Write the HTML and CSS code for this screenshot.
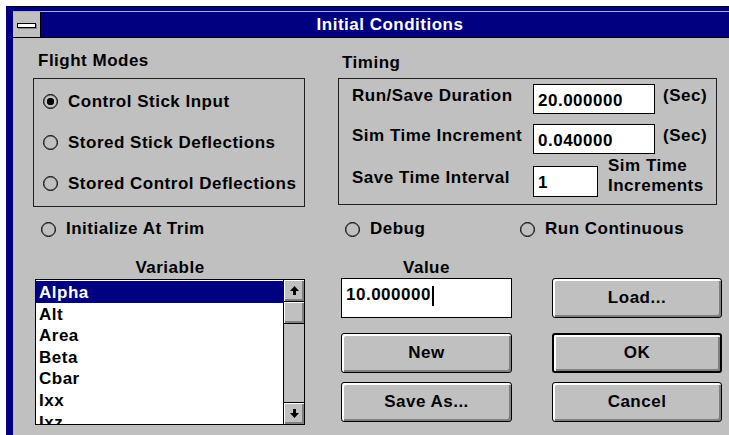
FILE: index.html
```html
<!DOCTYPE html>
<html lang="en">
<head>
<meta charset="utf-8">
<title>Initial Conditions</title>
<link rel="stylesheet" href="styles.css">
</head>
<body>
<div class="window">
  <div class="frame-top"></div>
  <div class="titlebar">
    <div class="sysmenu"><span class="dash"></span></div>
    <div class="title">Initial Conditions</div>
  </div>

  <div class="client">
    <div class="top-row">
      <section class="group">
        <div class="group-label flight-label">Flight Modes</div>
        <div class="group-box flight-box">
          <div class="option"><span class="radio checked"></span>Control Stick Input</div>
          <div class="option"><span class="radio"></span>Stored Stick Deflections</div>
          <div class="option"><span class="radio"></span>Stored Control Deflections</div>
        </div>
      </section>

      <section class="group">
        <div class="group-label timing-label">Timing</div>
        <div class="group-box timing-box">
          <div class="trow r1">
            <span class="tlabel">Run/Save Duration</span>
            <span class="field wide">20.000000</span>
            <span class="unit">(Sec)</span>
          </div>
          <div class="trow r2">
            <span class="tlabel">Sim Time Increment</span>
            <span class="field wide">0.040000</span>
            <span class="unit">(Sec)</span>
          </div>
          <div class="trow r3">
            <span class="tlabel">Save Time Interval</span>
            <span class="field narrow">1</span>
            <span class="unit two-line">Sim Time<br>Increments</span>
          </div>
        </div>
      </section>
    </div>

    <div class="options-row">
      <div class="option inline"><span class="radio"></span>Initialize At Trim</div>
      <div class="option inline"><span class="radio"></span>Debug</div>
      <div class="option inline"><span class="radio"></span>Run Continuous</div>
    </div>

    <div class="bottom">
      <div class="col-label var-label">Variable</div>
      <div class="col-label val-label">Value</div>

      <div class="listbox">
        <ul class="items">
          <li class="selected">Alpha</li>
          <li>Alt</li>
          <li>Area</li>
          <li>Beta</li>
          <li>Cbar</li>
          <li>Ixx</li>
          <li>Ixz</li>
        </ul>
        <div class="scrollbar">
          <div class="sb-btn sb-up">
            <svg width="11" height="11" viewBox="0 0 11 11"><path d="M5.5 1 L10 6 H7 V10 H4 V6 H1 Z" fill="#000"/></svg>
          </div>
          <div class="sb-thumb"></div>
          <div class="sb-track"></div>
          <div class="sb-btn sb-down">
            <svg width="11" height="11" viewBox="0 0 11 11"><path d="M5.5 10 L10 5 H7 V1 H4 V5 H1 Z" fill="#000"/></svg>
          </div>
        </div>
      </div>

      <div class="field value-field">10.000000<span class="caret"></span></div>
      <button class="btn load">Load...</button>
      <button class="btn new">New</button>
      <button class="btn ok default">OK</button>
      <button class="btn save">Save As...</button>
      <button class="btn cancel">Cancel</button>
    </div>
  </div>
</div>
</body>
</html>
```
FILE: styles.css
```css
* { box-sizing: border-box; }

html, body {
  margin: 0;
  padding: 0;
  background: #fff;
  overflow: hidden;
}

body {
  width: 729px;
  height: 435px;
  font-family: "Liberation Sans", Arial, sans-serif;
  font-weight: bold;
  font-size: 17px;
  letter-spacing: 0.5px;
  color: #000;
}

/* window frame */
.window {
  margin: 6px 0 0 6px;
  width: 723px;
  height: 429px;
  border-top: 1px solid #000;
  border-left: 7px solid #000080;
  background: #c0c0c0;
  overflow: hidden;
}

.frame-top {
  height: 5px;
  background: #000080;
  border-bottom: 1px solid #a8a8d8;
}

.titlebar {
  display: flex;
  height: 26px;
  background: #000080;
  border-bottom: 1px solid #000;
}

.sysmenu {
  width: 28px;
  height: 25px;
  background: #c0c0c0;
  border-right: 1px solid #000;
  padding: 11px 0 0 4px;
}

.dash {
  display: block;
  width: 19px;
  height: 5px;
  background: #fff;
  border: 1px solid #000;
  box-shadow: 1px 1px 0 #808080;
}

.title {
  flex: 1;
  color: #fff;
  text-align: center;
  line-height: 25px;
  padding-left: 10px;
}

/* client area */
.client {
  padding: 14px 0 0 20px;
}

.top-row {
  display: grid;
  grid-template-columns: 272px 379px;
  column-gap: 33px;
  align-items: start;
}

.group-label {
  line-height: 18px;
}

.flight-label {
  padding-left: 5px;
  margin-bottom: 8px;
}

.timing-label {
  padding-left: 4px;
  margin-top: 2px;
  margin-bottom: 6px;
}

.group-box {
  border: 1px solid #202020;
}

.flight-box {
  height: 129px;
  padding: 2px 0 0 9px;
}

.option {
  display: flex;
  align-items: center;
  height: 41px;
  line-height: 18px;
  white-space: nowrap;
}

.radio {
  flex: none;
  width: 15px;
  height: 15px;
  border: 1px solid #000;
  border-radius: 50%;
  box-shadow: inset 0 0 0 0.5px #505050;
  margin-right: 10px;
}

.radio.checked {
  background: radial-gradient(circle, #000 0 3.4px, transparent 4px);
}

/* timing fields */
.timing-box {
  height: 127px;
  padding: 5px 0 0 13px;
}

.trow {
  display: grid;
  grid-template-columns: 181px auto auto;
  justify-content: start;
  align-items: start;
  white-space: nowrap;
}

.trow.r1 { height: 40px; }
.trow.r2 { height: 42px; }
.trow.r3 { height: 31px; }

.tlabel {
  line-height: 18px;
  margin-top: 3px;
}

.field {
  display: block;
  background: #fff;
  border: 1px solid #000;
  line-height: 18px;
  padding: 7px 4px 0;
  white-space: nowrap;
}

.field.wide {
  width: 122px;
  height: 30px;
}

.field.narrow {
  width: 65px;
  height: 31px;
}

.unit {
  line-height: 18px;
  margin: 3px 0 0 8px;
}

.unit.two-line {
  line-height: 20px;
  margin: -10px 0 0 10px;
}

/* independent options */
.options-row {
  display: grid;
  grid-template-columns: 304px 175px auto;
  margin-top: 13px;
  padding-left: 8px;
}

.option.inline {
  height: 18px;
}

/* variable list, value and buttons */
.bottom {
  display: grid;
  grid-template-columns: 270px 36px 171px 40px 170px;
  grid-template-rows: 19px 40px 15px 40px 9px 40px;
  margin: 21px 0 0 2px;
}

.col-label {
  line-height: 18px;
  text-align: center;
}

.var-label { grid-column: 1; grid-row: 1; }
.val-label { grid-column: 3; grid-row: 1; }

.listbox {
  grid-column: 1;
  grid-row: 2 / 7;
  align-self: start;
  margin-top: 1px;
  height: 146px;
  display: flex;
  border: 1px solid #000;
  background: #fff;
}

.items {
  flex: 1;
  margin: 0;
  padding: 1px 0 0;
  list-style: none;
  overflow: hidden;
}

.items li {
  height: 21.6px;
  line-height: 20px;
  padding: 2px 0 0 3px;
}

.items li.selected {
  background: #000080;
  color: #fff;
}

.scrollbar {
  width: 21px;
  border-left: 1px solid #000;
  background: #c0c0c0;
  display: flex;
  flex-direction: column;
}

.sb-btn {
  height: 22px;
  display: flex;
  align-items: center;
  justify-content: center;
  background: #c0c0c0;
  box-shadow: inset 1px 1px 0 #fff, inset -2px -2px 0 #808080;
}

.sb-up {
  border-bottom: 1px solid #000;
}

.sb-down {
  border-top: 1px solid #000;
}

.sb-thumb {
  height: 22px;
  border-bottom: 1px solid #000;
  box-shadow: inset 1px 1px 0 #fff, inset -2px -2px 0 #808080;
}

.sb-track {
  flex: 1;
}

.value-field {
  grid-column: 3;
  grid-row: 2;
  height: 40px;
  padding-top: 7px;
  display: flex;
  align-items: flex-start;
}

.caret {
  display: inline-block;
  width: 2px;
  height: 20px;
  background: #000;
  margin: 0 0 0 1px;
}

.btn {
  font: inherit;
  letter-spacing: inherit;
  color: #000;
  height: 40px;
  margin: 0;
  padding: 0;
  background: #c0c0c0;
  border: 1px solid #000;
  border-radius: 3px;
  box-shadow: inset 2px 2px 0 #fff, inset -2px -2px 0 #808080;
}

.btn.default {
  border-width: 2px;
}

.load   { grid-column: 5; grid-row: 2; }
.new    { grid-column: 3; grid-row: 4; }
.ok     { grid-column: 5; grid-row: 4; }
.save   { grid-column: 3; grid-row: 6; }
.cancel { grid-column: 5; grid-row: 6; }
```
